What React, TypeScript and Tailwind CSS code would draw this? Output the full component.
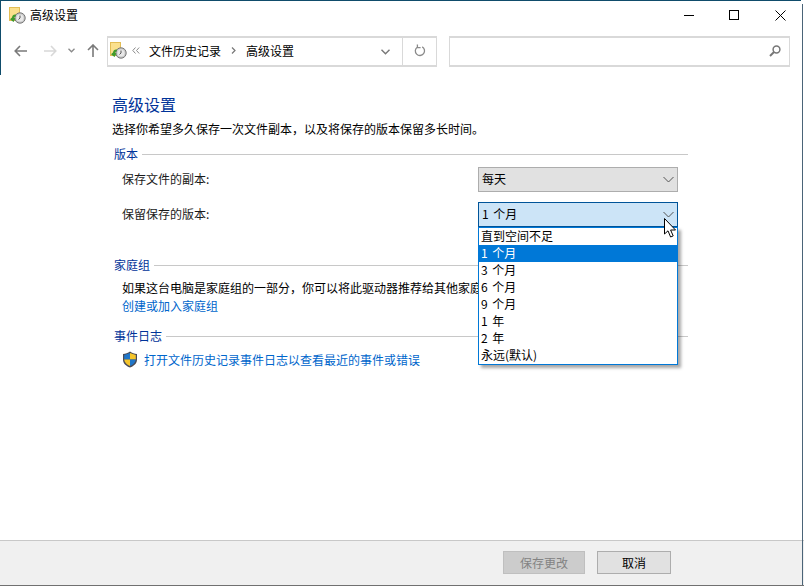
const font = { fontFamily: '"Noto Sans CJK SC", "Liberation Sans", sans-serif' }

function HistoryIcon() {
  return (
    <svg width="17" height="17" viewBox="0 0 17 17" className="shrink-0">
      <rect x="0.5" y="0.5" width="10" height="13" fill="#fbe08d" stroke="#e3bd55" />
      <circle cx="11" cy="11" r="5.2" fill="#c9c9c9" stroke="#777777" />
      <circle cx="11" cy="11" r="3.5" fill="#e8e8e8" />
      <path d="M11 8.5V11L9.5 12.5" stroke="#555555" fill="none" />
      <path d="M3 10.5a3.5 3.5 0 0 1 4-3l-.5 2 -.5 .3a2 2 0 0 0-1.2 .9L6.5 11.5 4.5 15 1 12.2z" fill="#3f9b2c" />
    </svg>
  )
}

function Chevron({ color = '#555555' }: { color?: string }) {
  return (
    <svg width="11" height="7" viewBox="0 0 11 7">
      <path d="M0.5 1L5.5 6L10.5 1" stroke={color} fill="none" />
    </svg>
  )
}

function SectionTitle({ title }: { title: string }) {
  return (
    <div className="flex items-center h-4 ml-[2px] w-[574px]">
      <span className="text-xs leading-4 text-[#003399]">{title}</span>
      <div className="flex-1 h-px bg-[#c8c8c8] ml-1" />
    </div>
  )
}

const options = ['直到空间不足', '1 个月', '3 个月', '6 个月', '9 个月', '1 年', '2 年', '永远(默认)']

export default function App() {
  return (
    <div style={font} className="relative w-[804px] h-[586px] bg-white overflow-hidden flex flex-col text-xs text-[#1a1a1a]">
      {/* window frame */}
      <div className="absolute top-0 left-0 w-[801px] h-px bg-[#0f4c6b]" />
      <div className="absolute top-0 left-0 w-px h-[75px] bg-[#0f4c6b]" />
      <div className="absolute top-[4px] right-[1px] w-px h-[581px] bg-[#4a6478]" />

      {/* title bar */}
      <div className="flex items-center h-[30px] pl-[9px]">
        <HistoryIcon />
        <span className="ml-[4px] text-xs text-black">高级设置</span>
        <div className="ml-auto flex items-center mr-[18px]">
          <svg width="10" height="10" viewBox="0 0 10 10"><path d="M0 5.5H10" stroke="#000" /></svg>
          <svg width="10" height="10" viewBox="0 0 10 10" className="ml-[35px]"><rect x="0.5" y="0.5" width="9" height="9" fill="none" stroke="#000" /></svg>
          <svg width="11" height="11" viewBox="0 0 11 11" className="ml-[36px]"><path d="M0.5 0.5L10.5 10.5M10.5 0.5L0.5 10.5" stroke="#000" /></svg>
        </div>
      </div>

      {/* nav row */}
      <div className="flex items-center h-[31px] mt-[6px]">
        <div className="flex items-center w-[107px] pl-[14px] pb-[2px] shrink-0">
          <svg width="13" height="12" viewBox="0 0 13 12"><path d="M6 1L1.2 6L6 11M1.2 6H13" stroke="#7a7a7a" strokeWidth="1.6" fill="none" /></svg>
          <svg width="13" height="12" viewBox="0 0 13 12" className="ml-[17px]"><path d="M7 1L11.8 6L7 11M11.8 6H0" stroke="#d8d8d8" strokeWidth="1.6" fill="none" /></svg>
          <svg width="7" height="5" viewBox="0 0 7 5" className="ml-[11px]"><path d="M0.5 0.8L3.5 3.8L6.5 0.8" stroke="#8a8a8a" strokeWidth="1.3" fill="none" /></svg>
          <svg width="12" height="13" viewBox="0 0 12 13" className="ml-[12px]"><path d="M1 6L6 1L11 6M6 1V13" stroke="#7a7a7a" strokeWidth="1.6" fill="none" /></svg>
        </div>
        <div className="flex items-center w-[330px] h-[31px] border-2 border-[#d9d9d9] border-x-[1px] shrink-0">
          <div className="flex items-center flex-1 pl-[2px] pb-[2px]">
            <HistoryIcon />
            <svg width="8" height="7" viewBox="0 0 8 7" className="ml-[5px]"><path d="M3.5 0.5L0.8 3.5L3.5 6.5M7.2 0.5L4.5 3.5L7.2 6.5" stroke="#8a8a8a" fill="none" /></svg>
            <span className="ml-[9px] text-black">文件历史记录</span>
            <svg width="5" height="7" viewBox="0 0 5 7" className="ml-[10px]"><path d="M1 0.5L4 3.5L1 6.5" stroke="#777777" strokeWidth="1.2" fill="none" /></svg>
            <span className="ml-[10px] text-black">高级设置</span>
          </div>
          <svg width="9" height="6" viewBox="0 0 9 6" className="mr-[12px]"><path d="M0.5 0.8L4.5 4.8L8.5 0.8" stroke="#777777" strokeWidth="1.4" fill="none" /></svg>
          <div className="flex items-center justify-center w-[34px] h-full border-l border-[#d9d9d9] pb-[2px]">
            <svg width="12" height="13" viewBox="0 0 12 13"><path d="M3.2 3.2a4.6 4.6 0 1 0 5 -.3M3.4 0.5V3.6H6.6" stroke="#8a8a8a" strokeWidth="1.3" fill="none" /></svg>
          </div>
        </div>
        <div className="flex items-center justify-end ml-[12px] w-[341px] h-[31px] border-2 border-x-[1px] border-[#d9d9d9] pr-[8px] pb-[2px]">
          <svg width="12" height="12" viewBox="0 0 12 12"><circle cx="7.5" cy="4.5" r="3.4" stroke="#777777" strokeWidth="1.5" fill="none" /><path d="M5 7L1 11" stroke="#777777" strokeWidth="2" /></svg>
        </div>
      </div>

      {/* content */}
      <div className="flex-1 pl-[112px] pt-[26px]">
        <div className="text-base leading-[22px] text-[#003399]">高级设置</div>
        <div className="mt-[6px] leading-4 text-black">选择你希望多久保存一次文件副本，以及将保存的版本保留多长时间。</div>

        <div className="mt-[9px]"><SectionTitle title="版本" /></div>
        <div className="relative w-[556px] ml-[10px] mt-[5px]">
          <div className="flex items-center justify-between h-[25px]">
            <span className="pb-[2px]">保存文件的副本:</span>
            <div className="flex items-center justify-between w-[200px] h-[25px] bg-[#e1e1e1] border border-[#adadad] pl-[3px] pr-[3px]">
              <span className="text-black pb-[2px]">每天</span>
              <Chevron />
            </div>
          </div>
          <div className="flex items-center justify-between h-[25px] mt-[10px]">
            <span className="pb-[2px]">保留保存的版本:</span>
            <div className="flex items-center justify-between w-[200px] h-[25px] bg-[#cce4f7] border border-[#005499] pl-[3px] pr-[3px]">
              <span className="text-black pb-[2px] [word-spacing:2px]">1 个月</span>
              <Chevron />
            </div>
          </div>
          {/* open dropdown */}
          <div className="absolute z-10 top-[60px] right-0 w-[200px] bg-white border border-[#0078d7] shadow-[3px_3px_3px_rgba(0,0,0,0.35)]">
            {options.map((opt, i) => (
              <div key={opt} className={`h-[17px] leading-[15px] pl-[2px] [word-spacing:2px] ${i === 1 ? 'bg-[#0078d7] text-white' : 'text-black'}`}>
                {opt}
              </div>
            ))}
          </div>
        </div>

        <div className="mt-[30px]"><SectionTitle title="家庭组" /></div>
        <div className="ml-[10px] mt-[6px] leading-[18px] whitespace-nowrap">
          <div className="text-black">如果这台电脑是家庭组的一部分，你可以将此驱动器推荐给其他家庭组成员。</div>
          <div className="text-[#0066cc]">创建或加入家庭组</div>
        </div>

        <div className="mt-[13px]"><SectionTitle title="事件日志" /></div>
        <div className="flex items-center ml-[10px] mt-[7px] h-[17px]">
          <svg width="16" height="17" viewBox="0 0 16 17" className="shrink-0">
            <path d="M8 0.5C10 2 12.5 2.8 15 3V8.5C15 12.5 12 15 8 16.5C4 15 1 12.5 1 8.5V3C3.5 2.8 6 2 8 0.5Z" fill="#4a4a55" />
            <path d="M8 2L2.2 4V8.5H8Z" fill="#1f76c9" />
            <path d="M8 2L13.8 4V8.5H8Z" fill="#f5c52b" />
            <path d="M2.2 8.5H8V15C5 13.8 2.6 12 2.2 8.5Z" fill="#f5c52b" />
            <path d="M13.8 8.5H8V15C11 13.8 13.4 12 13.8 8.5Z" fill="#1f76c9" />
          </svg>
          <span className="ml-[6px] text-[#0066cc]">打开文件历史记录事件日志以查看最近的事件或错误</span>
        </div>
      </div>

      {/* footer */}
      <div className="flex justify-end items-start h-[46px] bg-[#f0f0f0] border-t border-[#c8c8c8] border-b border-b-[#707070] pt-[10px] pr-[133px] gap-[12px]">
        <div className="flex items-center justify-center w-[82px] h-[23px] bg-[#cccccc] border border-[#bfbfbf] text-[#838383]">保存更改</div>
        <div className="flex items-center justify-center w-[74px] h-[23px] bg-[#e1e1e1] border border-[#adadad] text-black">取消</div>
      </div>

      {/* mouse cursor */}
      <svg width="15" height="21" viewBox="0 0 15 21" className="absolute z-20 left-[664px] top-[218px]">
        <path d="M0.5 0.5V16L4 12.8L6.6 19L9.2 17.9L6.6 12H11.5Z" fill="#ffffff" stroke="#000000" />
      </svg>
    </div>
  )
}
